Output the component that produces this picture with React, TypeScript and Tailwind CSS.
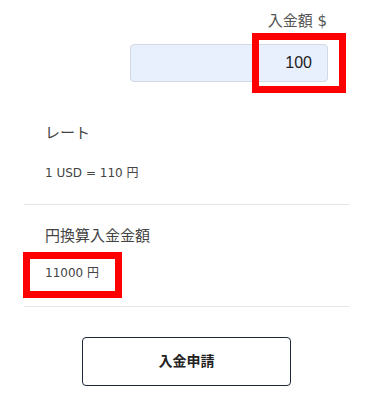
import React from "react";

export default function App() {
  return (
    <div
      className="relative w-[373px] h-[393px] bg-white overflow-hidden"
      style={{ fontFamily: '"Liberation Sans", "Noto Sans CJK JP", sans-serif' }}
    >
      <div className="flex flex-col items-end pr-[45px] pt-[10px]">
        <div className="text-[15px] leading-[20px] text-[#555] pr-[1px] font-['DejaVu_Sans','Noto_Sans_CJK_JP',sans-serif]">
          <span className="font-['Noto_Sans_CJK_JP',sans-serif]">入金額</span> $
        </div>
        <div className="mt-[13px] w-[198px] h-[38px] rounded-[4px] border border-[#d3d9e2] bg-[#e8f0fe] flex items-center justify-end pr-[15px] text-[16px] text-[#222]">
          100
        </div>
      </div>

      <div className="mx-[24px]">
        <div className="pl-[21px] pt-[40px] pb-[22px]">
          <div className="text-[15px] leading-[22px] text-[#444]">レート</div>
          <div className="mt-[20px] text-[12px] leading-[18px] text-[#444] font-['DejaVu_Sans','Noto_Sans_CJK_JP',sans-serif]">
            1 USD = 110 円
          </div>
        </div>
        <div className="border-t border-[#e6e6e6]" />
        <div className="pl-[21px] pt-[20px] pb-[24px]">
          <div className="text-[15px] leading-[22px] text-[#444]">円換算入金金額</div>
          <div className="mt-[17px] text-[12px] leading-[18px] text-[#444] font-['DejaVu_Sans','Noto_Sans_CJK_JP',sans-serif]">
            11000 円
          </div>
        </div>
        <div className="border-t border-[#e6e6e6]" />
      </div>

      <div className="mt-[30px] ml-[82px] w-[209px] h-[49px] rounded-[4px] border border-[#1e2a3b] flex items-center justify-center text-[14px] font-bold text-[#222]">
        入金申請
      </div>

      <div className="absolute left-[252px] top-[33px] w-[94px] h-[60px] border-[7px] border-[#ff0000]" />
      <div className="absolute left-[23px] top-[252px] w-[99px] h-[46px] border-[7px] border-[#ff0000]" />
    </div>
  );
}
